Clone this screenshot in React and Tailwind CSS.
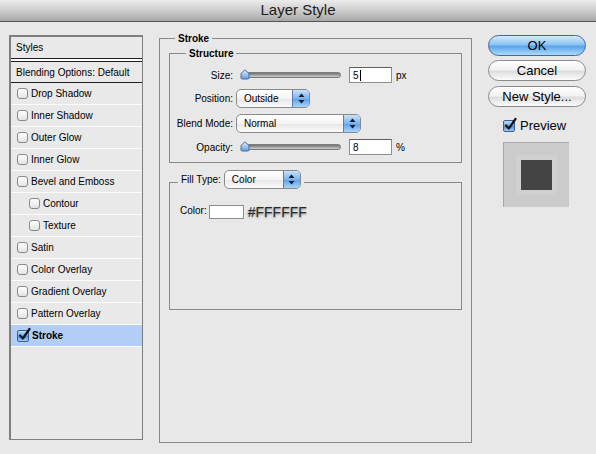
import React from "react";

function Box({ on }) {
  if (on) {
    return (
      <span className="relative w-[12px] h-[12px] shrink-0 rounded-[2px] border border-[#3e5f8f] bg-[linear-gradient(to_bottom,#c4defa,#6aa5e8_50%,#4a8fe0_51%,#9cccf7)]">
        <svg className="absolute left-[0px] top-[-3px] overflow-visible" width="13" height="13" viewBox="0 0 13 13">
          <path d="M2 7.5 L4.8 10.5 L11.5 1" fill="none" stroke="#151515" strokeWidth="2.2" strokeLinecap="round" strokeLinejoin="round" />
        </svg>
      </span>
    );
  }
  return (
    <span className="w-[11px] h-[11px] shrink-0 rounded-[3px] border border-[#8a8a8a] bg-[linear-gradient(to_bottom,#ffffff,#e3e3e3)]" />
  );
}

function Stepper() {
  return (
    <div className="w-[17px] h-full border-l border-[#5a7db3] bg-[linear-gradient(to_bottom,#c9e2fb,#7ab4ee_50%,#5c9fe8_51%,#a7d5fb)] flex items-center justify-center">
      <svg width="7" height="11" viewBox="0 0 7 11">
        <path d="M3.5 0.5 L6.5 4 L0.5 4 Z" fill="#0f1c33" />
        <path d="M3.5 10.5 L6.5 7 L0.5 7 Z" fill="#0f1c33" />
      </svg>
    </div>
  );
}

function Select({ value, className }) {
  return (
    <div className={"flex h-[19px] rounded-[5px] border border-[#8a8a8a] overflow-hidden bg-[linear-gradient(to_bottom,#ffffff,#f4f4f4_50%,#e6e6e6_51%,#fcfcfc)] " + className}>
      <span className="flex-1 flex items-center pl-[7px]">{value}</span>
      <Stepper />
    </div>
  );
}

function Slider() {
  return (
    <div className="relative ml-[3px] w-[105px] h-[14px] flex items-center">
      <div className="ml-[5px] w-[100px] h-[6px] rounded-full border border-[#7c7c7c] bg-[linear-gradient(to_bottom,#6f6f6f,#a9a9a9_60%,#cfcfcf)]" />
      <svg className="absolute left-[4px] top-[1px]" width="10" height="11" viewBox="0 0 10 11">
        <defs>
          <linearGradient id="th" x1="0" y1="0" x2="0" y2="1">
            <stop offset="0" stopColor="#e6f1fd" />
            <stop offset="1" stopColor="#5f9de3" />
          </linearGradient>
        </defs>
        <path d="M1 4.5 L5 0.8 L9 4.5 L9 9 Q9 10 8 10 L2 10 Q1 10 1 9 Z" fill="url(#th)" stroke="#4f6d99" strokeWidth="1" />
      </svg>
    </div>
  );
}

function Field({ value, caret }) {
  return (
    <div className="ml-[8px] w-[43px] h-[16px] bg-white border border-[#8c8c8c] border-t-[#5e5e5e] flex items-center pl-[3px]">
      {value}
      {caret && <span className="ml-[1px] w-[1px] h-[11px] bg-black" />}
    </div>
  );
}

const items = [
  { name: "Drop Shadow" },
  { name: "Inner Shadow" },
  { name: "Outer Glow" },
  { name: "Inner Glow" },
  { name: "Bevel and Emboss" },
  { name: "Contour", sub: true },
  { name: "Texture", sub: true },
  { name: "Satin" },
  { name: "Color Overlay" },
  { name: "Gradient Overlay" },
  { name: "Pattern Overlay" },
  { name: "Stroke", on: true },
];

export default function App() {
  return (
    <div className="w-[596px] h-[454px] overflow-hidden bg-[#e8e8e8] text-[10px] text-black font-['Liberation_Sans',Arial,sans-serif]">
      <div className="h-[22px] border-b border-[#555555] bg-[linear-gradient(to_bottom,#ededed,#c9c9c9_55%,#a7a7a7)] flex items-center justify-center text-[15px] text-[#1c1c1c]">
        Layer Style
      </div>

      <div className="flex items-start pl-[9px]">
        {/* styles list */}
        <div className="mt-[13px] w-[134px] h-[405px] border border-[#7f7f7f] border-l-2 border-t-2 bg-[#e9e9e9]">
          <div className="h-[22px] border-b border-[#1e1e1e] flex items-center pl-[5px]">Styles</div>
          <div className="h-[2px] bg-[#fafafa]" />
          <div className="h-[22px] border-y border-[#1e1e1e] flex items-center pl-[5px]">Blending Options: Default</div>
          {items.map((it) => (
            <div
              key={it.name}
              className={
                "h-[22px] border-b border-[#fbfbfb] flex items-center gap-[3px] " +
                (it.sub ? "pl-[18px] " : "pl-[6px] ") +
                (it.on ? "bg-[#b2cdf6] font-bold" : "")
              }
            >
              <Box on={it.on} />
              <span>{it.name}</span>
            </div>
          ))}
        </div>

        {/* stroke panel */}
        <fieldset className="ml-[16px] mt-[10px] w-[313px] h-[411px] border border-[#8a8a8a] p-0">
          <legend className="ml-[15px] px-[3px] font-bold leading-[13px]">Stroke</legend>
          <div className="px-[9px] pt-[2px]">
            <fieldset className="border border-[#8a8a8a] p-0">
              <legend className="ml-[16px] px-[3px] font-bold leading-[13px]">Structure</legend>
              <div className="pt-[4px] pb-[4px]">
                <div className="h-[22px] flex items-center">
                  <span className="w-[63px] text-right">Size:</span>
                  <Slider />
                  <Field value="5" caret />
                  <span className="ml-[4px]">px</span>
                </div>
                <div className="h-[24px] flex items-center">
                  <span className="w-[63px] text-right">Position:</span>
                  <Select value="Outside" className="ml-[3px] w-[74px]" />
                </div>
                <div className="h-[26px] flex items-center">
                  <span className="w-[63px] text-right">Blend Mode:</span>
                  <Select value="Normal" className="ml-[3px] w-[125px]" />
                </div>
                <div className="h-[22px] flex items-center">
                  <span className="w-[63px] text-right">Opacity:</span>
                  <Slider />
                  <Field value="8" />
                  <span className="ml-[4px]">%</span>
                </div>
              </div>
            </fieldset>

            <fieldset className="mt-[7px] h-[140px] border border-[#8a8a8a] p-0">
              <legend className="ml-[8px] px-[3px] pb-[6px]">
                <div className="flex items-center">
                  <span>Fill Type:</span>
                  <Select value="Color" className="ml-[3px] w-[77px]" />
                </div>
              </legend>
              <div className="pt-[10px] pl-[10px] flex items-center h-[24px] leading-[14px]">
                <span className="mt-[-3px]">Color:</span>
                <span className="ml-[2px] w-[35px] h-[14px] bg-white border border-[#8c8c8c]" />
                <span className="ml-[4px] text-[14px] leading-[14px] text-[#2a2a2a] [text-shadow:0_1px_2px_rgba(0,0,0,0.45)]">#FFFFFF</span>
              </div>
            </fieldset>
          </div>
        </fieldset>

        {/* buttons */}
        <div className="ml-[16px] mt-[13px] w-[98px] flex flex-col text-[13px]">
          <button className="h-[21px] rounded-full border border-[#46679c] bg-[linear-gradient(to_bottom,#d6eafc,#8dc3f3_45%,#5ba4ec_55%,#aadcfd)] flex items-center justify-center">
            OK
          </button>
          <button className="mt-[4px] h-[21px] rounded-full border border-[#8a8a8a] bg-[linear-gradient(to_bottom,#ffffff,#f2f2f2_45%,#dedede_55%,#fbfbfb)] flex items-center justify-center">
            Cancel
          </button>
          <button className="mt-[5px] h-[21px] rounded-full border border-[#8a8a8a] bg-[linear-gradient(to_bottom,#ffffff,#f2f2f2_45%,#dedede_55%,#fbfbfb)] flex items-center justify-center">
            New Style...
          </button>
          <div className="mt-[12px] ml-[15px] h-[14px] flex items-center gap-[5px]">
            <Box on />
            <span>Preview</span>
          </div>
          <div className="mt-[9px] ml-[15px] w-[66px] h-[65px] bg-[#cbcbcb] border-t border-l border-[#a8a8a8] flex items-center justify-center">
            <div className="w-[31px] h-[30px] bg-[#444444] ring-[5px] ring-white/10" />
          </div>
        </div>
      </div>
    </div>
  );
}
